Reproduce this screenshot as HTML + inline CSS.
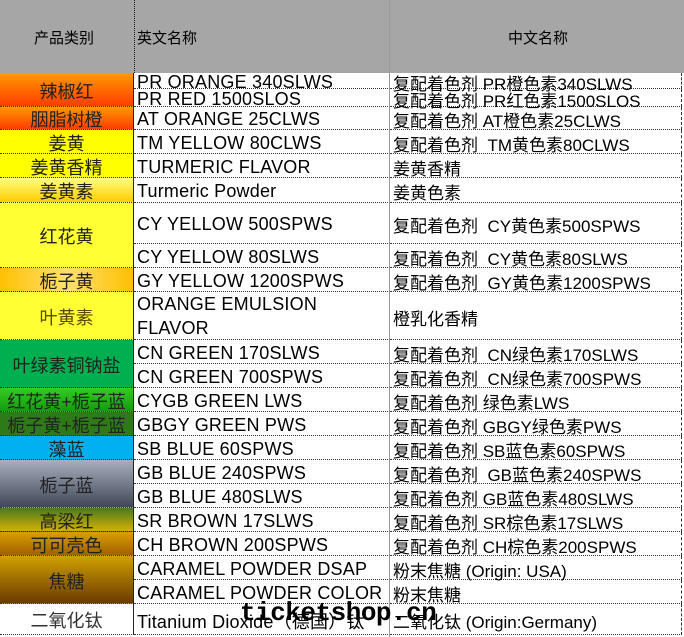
<!DOCTYPE html>
<html><head><meta charset="utf-8"><style>
body{margin:0;width:684px;height:637px;background:#fff;position:relative;overflow:hidden;font-family:"Liberation Sans","Noto Sans CJK SC",sans-serif;}
.a{position:absolute;box-sizing:border-box;}
.h{background:#a6a6a6;font-size:14px;color:#222;}
.c{left:0;width:134px;display:flex;align-items:center;justify-content:center;font-size:18px;color:#222;border-right:1px solid #222;border-bottom:1px dotted #333;white-space:nowrap;overflow:hidden;padding-top:2px;}
.e{left:134px;width:256px;padding-left:3px;padding-top:3px;font-size:18px;letter-spacing:0.2px;color:#000;border-bottom:1px dotted #333;display:flex;align-items:center;white-space:nowrap;overflow:visible;}
.z{left:390px;width:292px;padding-left:3px;padding-top:3px;font-size:17px;color:#000;border-bottom:1px dotted #333;display:flex;align-items:center;white-space:nowrap;border-right:1px dashed #333;}
.vl{position:absolute;left:389px;top:0;width:1px;height:637px;background:#999;}
</style></head><body>
<div class="a h" style="left:0;top:0;width:684px;height:73px;"></div>
<div class="a" style="left:134px;top:0;width:0;height:73px;border-left:1px dotted #222"></div>
<div class="a" style="left:34px;top:27px;font-size:15px;">产品类别</div>
<div class="a" style="left:137px;top:27px;font-size:15px;">英文名称</div>
<div class="a" style="left:508px;top:27px;font-size:15px;">中文名称</div>

<div class="a c" style="top:73px;height:34px;background:linear-gradient(#ff9a00,#ff3c00)">辣椒红</div>
<div class="a c" style="top:107px;height:23px;background:linear-gradient(#ff9a00,#ff3c00)">胭脂树橙</div>
<div class="a c" style="top:130px;height:24px;background:#ffff00">姜黄</div>
<div class="a c" style="top:154px;height:24px;background:#ffff00">姜黄香精</div>
<div class="a c" style="top:178px;height:25px;background:linear-gradient(#ffff80,#ffcc00)">姜黄素</div>
<div class="a c" style="top:203px;height:65px;background:#ffff33">红花黄</div>
<div class="a c" style="top:268px;height:24px;background:linear-gradient(90deg,#ffc000,#ffe070 50%,#ffc000)">栀子黄</div>
<div class="a c" style="top:292px;height:48px;background:#ffff33;color:#5a4a00">叶黄素</div>
<div class="a c" style="top:340px;height:48px;background:#00b050">叶绿素铜钠盐</div>
<div class="a c" style="top:388px;height:24px;background:linear-gradient(#33cc22,#169a10)">红花黄+栀子蓝</div>
<div class="a c" style="top:412px;height:24px;background:#2e7a18">栀子黄+栀子蓝</div>
<div class="a c" style="top:436px;height:24px;background:#00b0f0">藻蓝</div>
<div class="a c" style="top:460px;height:48px;background:linear-gradient(#a8b0c0,#404858)">栀子蓝</div>
<div class="a c" style="top:508px;height:24px;background:linear-gradient(#4a7a20,#d4b000)">高梁红</div>
<div class="a c" style="top:532px;height:24px;background:linear-gradient(#d8a000,#a06000)">可可壳色</div>
<div class="a c" style="top:556px;height:48px;background:linear-gradient(#d0a000,#6a3a00)">焦糖</div>
<div class="a c" style="top:604px;height:31px;background:#fff;color:#333">二氧化钛</div>

<div class="a e" style="top:73px;height:16px">PR ORANGE 340SLWS</div>
<div class="a e" style="top:89px;height:18px">PR RED 1500SLOS</div>
<div class="a e" style="top:107px;height:23px">AT ORANGE 25CLWS</div>
<div class="a e" style="top:130px;height:24px">TM YELLOW 80CLWS</div>
<div class="a e" style="top:154px;height:24px">TURMERIC FLAVOR</div>
<div class="a e" style="top:178px;height:25px">Turmeric Powder</div>
<div class="a e" style="top:203px;height:41px">CY YELLOW 500SPWS</div>
<div class="a e" style="top:244px;height:24px">CY YELLOW 80SLWS</div>
<div class="a e" style="top:268px;height:24px">GY YELLOW 1200SPWS</div>
<div class="a e" style="top:292px;height:48px;line-height:24px;white-space:normal;padding-top:0">ORANGE EMULSION<br>FLAVOR</div>
<div class="a e" style="top:340px;height:24px">CN GREEN 170SLWS</div>
<div class="a e" style="top:364px;height:24px">CN GREEN 700SPWS</div>
<div class="a e" style="top:388px;height:24px">CYGB GREEN LWS</div>
<div class="a e" style="top:412px;height:24px">GBGY GREEN PWS</div>
<div class="a e" style="top:436px;height:24px">SB BLUE 60SPWS</div>
<div class="a e" style="top:460px;height:24px">GB BLUE 240SPWS</div>
<div class="a e" style="top:484px;height:24px">GB BLUE 480SLWS</div>
<div class="a e" style="top:508px;height:24px">SR BROWN 17SLWS</div>
<div class="a e" style="top:532px;height:24px">CH BROWN 200SPWS</div>
<div class="a e" style="top:556px;height:24px">CARAMEL POWDER DSAP</div>
<div class="a e" style="top:580px;height:24px">CARAMEL POWDER COLOR</div>
<div class="a e" style="top:604px;height:31px">Titanium Dioxide（德国）钛</div>

<div class="a z" style="top:73px;height:16px">复配着色剂 PR橙色素340SLWS</div>
<div class="a z" style="top:89px;height:18px">复配着色剂 PR红色素1500SLOS</div>
<div class="a z" style="top:107px;height:23px">复配着色剂 AT橙色素25CLWS</div>
<div class="a z" style="top:130px;height:24px">复配着色剂&nbsp; TM黄色素80CLWS</div>
<div class="a z" style="top:154px;height:24px">姜黄香精</div>
<div class="a z" style="top:178px;height:25px">姜黄色素</div>
<div class="a z" style="top:203px;height:41px">复配着色剂&nbsp; CY黄色素500SPWS</div>
<div class="a z" style="top:244px;height:24px">复配着色剂&nbsp; CY黄色素80SLWS</div>
<div class="a z" style="top:268px;height:24px">复配着色剂&nbsp; GY黄色素1200SPWS</div>
<div class="a z" style="top:292px;height:48px">橙乳化香精</div>
<div class="a z" style="top:340px;height:24px">复配着色剂&nbsp; CN绿色素170SLWS</div>
<div class="a z" style="top:364px;height:24px">复配着色剂&nbsp; CN绿色素700SPWS</div>
<div class="a z" style="top:388px;height:24px">复配着色剂 绿色素LWS</div>
<div class="a z" style="top:412px;height:24px">复配着色剂 GBGY绿色素PWS</div>
<div class="a z" style="top:436px;height:24px">复配着色剂 SB蓝色素60SPWS</div>
<div class="a z" style="top:460px;height:24px">复配着色剂&nbsp; GB蓝色素240SPWS</div>
<div class="a z" style="top:484px;height:24px">复配着色剂 GB蓝色素480SLWS</div>
<div class="a z" style="top:508px;height:24px">复配着色剂 SR棕色素17SLWS</div>
<div class="a z" style="top:532px;height:24px">复配着色剂 CH棕色素200SPWS</div>
<div class="a z" style="top:556px;height:24px">粉末焦糖 (Origin: USA)</div>
<div class="a z" style="top:580px;height:24px">粉末焦糖</div>
<div class="a z" style="top:604px;height:31px">二氧化钛 (Origin:Germany)</div>
<div class="vl"></div>
<div class="a" style="left:240px;top:598px;font-family:'Liberation Mono',monospace;font-weight:bold;font-size:26px;color:#000;letter-spacing:-0.5px;">ticketshop.cn</div>
</body></html>
